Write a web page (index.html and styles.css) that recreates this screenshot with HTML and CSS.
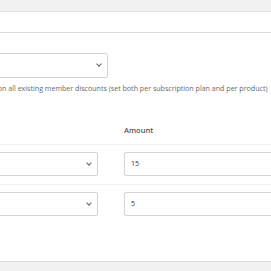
FILE: index.html
```html
<!DOCTYPE html>
<html lang="en">
<head>
    <link rel="stylesheet" href="styles.css">
    <title>Member discounts</title>
</head>
<body>
    <div class="topbar"></div>
    <div class="tabs"></div>
    <div class="content">
        <div class="select wide"><span class="chevron"></span></div>
        <p class="desc">Override on all existing member discounts (set both per subscription plan and per product)</p>
        <div class="table">
            <div class="head">
                <div class="th"></div>
                <div class="th">Amount</div>
            </div>
            <div class="row">
                <div class="select"><span class="chevron"></span></div>
                <div class="input">15</div>
            </div>
            <div class="row last">
                <div class="select"><span class="chevron"></span></div>
                <div class="input">5</div>
            </div>
        </div>
    </div>
    <div class="footer"></div>
</body>
</html>
```

FILE: styles.css
```css
body {
    margin: 0;
    width: 271px;
    height: 271px;
    overflow: hidden;
    background-color: #fff;
    font-family: "Open Sans", "Noto Sans", sans-serif;
    color: #444;
}

.topbar {
    height: 11px;
    background-color: #f1f1f1;
    border-bottom: 1px solid #e4e4e4;
}

.tabs {
    height: 20px;
    border-bottom: 1px solid #dcdcdc;
}

.content {
    margin-left: -40px;
    padding-top: 20px;
    height: 208px;
}

.select {
    box-sizing: border-box;
    height: 24px;
    border: 1px solid #d4d4d4;
    border-radius: 2px;
    display: flex;
    align-items: center;
    justify-content: flex-end;
    padding-right: 6px;
}

.select.wide {
    width: 148px;
    height: 25px;
}

.chevron {
    width: 3px;
    height: 3px;
    border-right: 1px solid #666;
    border-bottom: 1px solid #666;
    transform: rotate(45deg);
    margin-top: -3px;
}

.desc {
    margin: 5px 0 0 0;
    padding-left: 7px;
    font-size: 7.1px;
    line-height: 10px;
    color: #6a6a6a;
    white-space: nowrap;
}

.table {
    margin-top: 32px;
}

.head, .row {
    display: grid;
    grid-template-columns: 138px 180px;
    column-gap: 26px;
}

.head {
    border-bottom: 1px solid #f2f2f2;
    padding-bottom: 9px;
}

.th {
    font-size: 7.5px;
    font-weight: 600;
    color: #555;
    line-height: 10px;
}

.row {
    padding: 7px 0 8px 0;
    border-bottom: 1px solid #f2f2f2;
}

.row.last {
    border-bottom: none;
}

.input {
    box-sizing: border-box;
    height: 24px;
    border: 1px solid #d4d4d4;
    border-radius: 2px;
    padding-left: 6px;
    font-size: 7px;
    line-height: 22px;
    color: #333;
}

.footer {
    height: 10px;
    background-color: #f1f1f1;
    border-top: 1px solid #dcdcdc;
}
```
